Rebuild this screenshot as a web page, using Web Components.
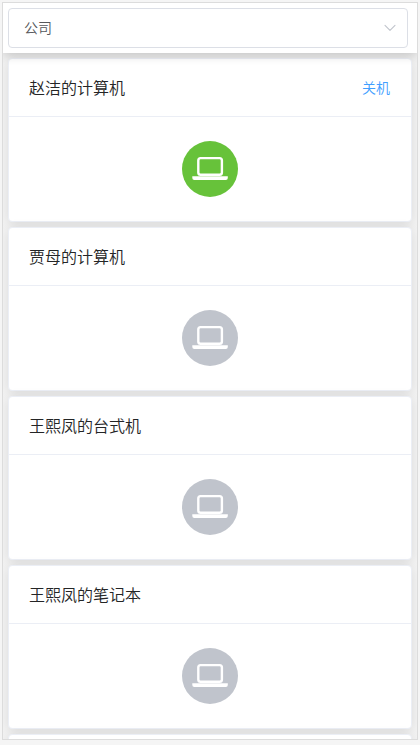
<!DOCTYPE html>
<html lang="zh-CN">
<head>
<meta charset="utf-8">
<title>计算机</title>
<style>
html,body{margin:0;height:100%;overflow:hidden}
body{background:#f5f5f5;font-family:"Noto Sans CJK SC",sans-serif;font-weight:350;color:#242526}
</style>
</head>
<body>
<device-app>
  <group-select slot="header">公司</group-select>
  <device-card online><span slot="name">赵洁的计算机</span></device-card>
  <device-card><span slot="name">贾母的计算机</span></device-card>
  <device-card><span slot="name">王熙凤的台式机</span></device-card>
  <device-card><span slot="name">王熙凤的笔记本</span></device-card>
  <device-card></device-card>
</device-app>
<script>
function define(name, html) {
  const template = document.createElement('template');
  template.innerHTML = html;
  customElements.define(name, class extends HTMLElement {
    constructor() {
      super();
      this.attachShadow({mode: 'open'}).append(template.content.cloneNode(true));
    }
  });
}

define('laptop-icon', `
<style>
:host{display:block;width:56px;height:56px;border-radius:50%;background:var(--status,#c0c4cc)}
svg{display:block}
</style>
<svg width="56" height="56" viewBox="0 0 56 56">
  <rect x="16.3" y="17.1" width="23.6" height="16.7" rx="2.3" fill="none" stroke="#fff" stroke-width="2.4"/>
  <path d="M10.3 35.2h35.5v1.8q0 2-2 2H12.3q-2 0-2-2z" fill="#fff"/>
</svg>`);

define('group-select', `
<style>
:host{box-sizing:border-box;display:flex;align-items:center;justify-content:space-between;width:400px;height:40px;padding:0 11px 0 15px;border:1px solid #dcdfe6;border-radius:4px;background:#fff;font-size:14px;line-height:36px;color:#55575b}
.value{padding-bottom:2px}
svg{display:block}
</style>
<span class="value"><slot></slot></span>
<svg width="12" height="8" viewBox="0 0 12 8" fill="none" stroke="#c0c4cc" stroke-width="1.1" stroke-linecap="round" stroke-linejoin="round"><path d="M1 1.4l5 5 5-5"/></svg>`);

define('device-card', `
<style>
:host{display:block;flex:none;box-sizing:border-box;height:164px;border:1px solid #ebeef5;border-radius:4px;background:#fff;box-shadow:0 2px 12px rgba(0,0,0,.1);overflow:hidden}
header{box-sizing:border-box;height:58px;padding:0 20px 2px;border-bottom:1px solid #ebeef5;display:flex;align-items:center;justify-content:space-between;font-size:16px;line-height:24px}
button{display:none;margin:0;padding:0 1px 0 0;border:0;background:none;font:inherit;font-size:14px;line-height:20px;color:#409eff}
:host([online]) button{display:block}
:host([online]){--status:#67c23a}
main{height:104px;display:flex;justify-content:center;align-items:center}
</style>
<header><slot name="name"></slot><button>关机</button></header>
<main><laptop-icon></laptop-icon></main>`);

define('device-app', `
<style>
:host{box-sizing:border-box;display:flex;flex-direction:column;width:416px;height:738px;border:1px solid #dcdcdc;overflow:hidden;background:#f3f3f3;margin:2px}
.bar{flex:none;box-sizing:border-box;height:50px;padding:5px;background:#fff;box-shadow:0 2px 10px rgba(0,0,0,.2);z-index:1}
.list{flex:1;min-height:0;overflow:hidden;display:flex;flex-direction:column;gap:5px;padding:5px 5px 0}
</style>
<div class="bar"><slot name="header"></slot></div>
<div class="list"><slot></slot></div>`);
</script>
</body>
</html>
